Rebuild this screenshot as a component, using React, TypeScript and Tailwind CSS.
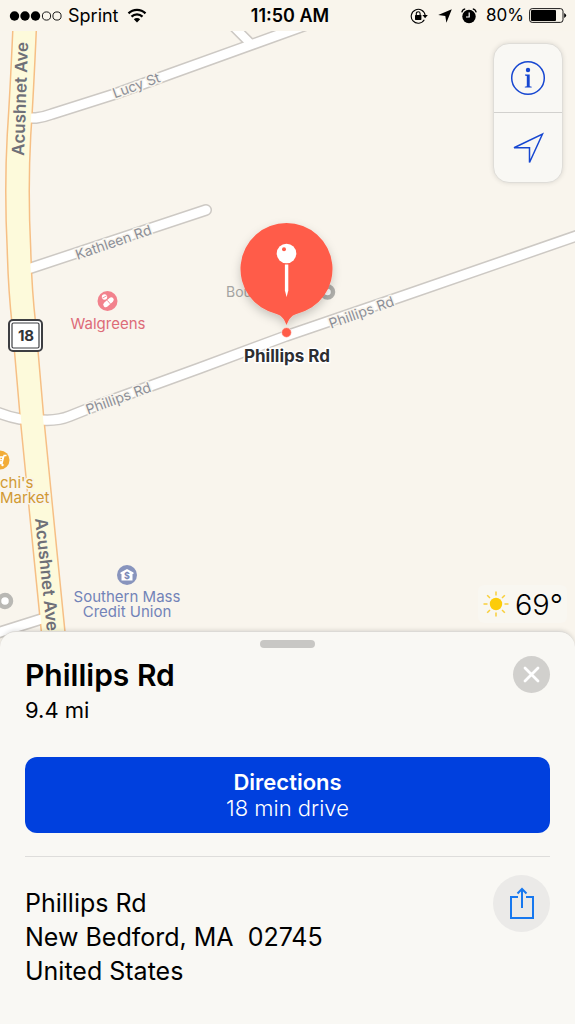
import type { ReactNode } from 'react'

const PHILLIPS = 'M-6 411 Q8 417 20 419 L42 420 Q58 421 70 416 L90 408 L200 368 L286 336 L400 297 L585 233'
const LUCY = 'M22 118 L36 118 Q44 117 52 114 L115 94 L170 74 L320 20'
const STREETS = [
  { d: PHILLIPS, w: 9 },
  { d: LUCY, w: 9 },
  { d: 'M230 23 L250 43', w: 8 },
  { d: 'M22 271 L206 210', w: 9 },
  { d: 'M-6 634 L48 617', w: 9 },
]
const AVENUE = 'M25 20 Q22 90 19 135 Q16 190 19 250 Q20 290 24 325 L32 418 L45 550 L56 660'

function Label({ x, y, rotate = 0, size = 14, weight = 400, fill, halo = '#f9f5ed', anchor = 'middle', children }: {
  x: number
  y: number
  rotate?: number
  size?: number
  weight?: number
  fill: string
  halo?: string
  anchor?: 'start' | 'middle'
  children: ReactNode
}) {
  return (
    <text
      transform={`translate(${x} ${y}) rotate(${rotate})`}
      fontSize={size}
      fontWeight={weight}
      fill={fill}
      stroke={halo}
      strokeWidth="3"
      strokeLinejoin="round"
      paintOrder="stroke"
      textAnchor={anchor}
    >
      {children}
    </text>
  )
}

function StatusBar() {
  return (
    <header className="grid h-[31px] grid-cols-[1fr_auto_1fr] items-center bg-[#f9f5ec] pr-2 pl-[9px] text-lg leading-none text-black">
      <div className="flex items-center gap-[6px]">
        <svg width="53" height="12" viewBox="0 0 53 12" aria-label="Signal: 3 of 5">
          {[5.5, 16, 26.5].map(cx => <circle key={cx} cx={cx} cy="6" r="4.7" />)}
          {[37.5, 48].map(cx => <circle key={cx} cx={cx} cy="6" r="4.1" fill="none" stroke="#000" strokeWidth="0.9" />)}
        </svg>
        <span>Sprint</span>
        <svg width="20" height="15" viewBox="0 0 20 15" className="ml-[2px]" aria-label="Wi-Fi">
          <g fill="none" stroke="#000" strokeWidth="2.2">
            <path d="M1.5 5.4a12 12 0 0 1 17 0" />
            <path d="M4.5 8.6a7.8 7.8 0 0 1 11 0" />
          </g>
          <path d="M6.8 11.2a4.6 4.6 0 0 1 6.4 0L10 14.4z" />
        </svg>
      </div>
      <time className="pl-1 font-semibold">11:50 AM</time>
      <div className="flex items-center justify-end">
        <svg width="18" height="16" viewBox="0 0 18 16" className="mr-[10px]" aria-label="Rotation lock">
          <path d="M14.3 11.8A7 7 0 1 1 15.2 7.6" fill="none" stroke="#000" strokeWidth="1.1" />
          <path d="M12.4 7h5.4l-2.7 3.3z" />
          <rect x="5" y="7" width="6.4" height="4.9" rx="0.6" />
          <path d="M6.3 7.2V5.6a1.9 1.9 0 0 1 3.8 0v1.6" fill="none" stroke="#000" strokeWidth="1.1" />
        </svg>
        <svg width="14" height="14" viewBox="0 0 14 14" className="mr-[9px]" aria-label="Location">
          <path d="M13.8 0.2 8.4 13.8 7.3 6.9 0.2 6.1z" />
        </svg>
        <svg width="16" height="16" viewBox="0 0 16 16" className="mr-[9px]" aria-label="Alarm">
          <circle cx="8" cy="8.5" r="6.7" />
          <path d="M0.8 4.3Q1.4 1.5 4.2 0.9M15.2 4.3Q14.6 1.5 11.8 0.9" fill="none" stroke="#000" strokeWidth="1.3" />
          <path d="M8.2 4.5V9H5" fill="none" stroke="#fff" strokeWidth="1.2" />
        </svg>
        <span className="mr-[5px] text-[17px]">80%</span>
        <svg width="38" height="15" viewBox="0 0 38 15" aria-label="Battery">
          <rect x="0.6" y="0.6" width="33.4" height="13.8" rx="2.6" fill="none" stroke="#000" strokeWidth="0.9" />
          <rect x="2" y="2" width="25" height="11" rx="1" />
          <path d="M35.2 5q4 2.5 0 5z" />
        </svg>
      </div>
    </header>
  )
}

function MapCanvas() {
  return (
    <svg className="absolute inset-0 h-full w-full" viewBox="0 31 575 612" preserveAspectRatio="xMidYMid slice" role="img" aria-label="Map around Phillips Rd">
      <defs>
        <filter id="pin-shadow" x="-30%" y="-30%" width="160%" height="160%">
          <feDropShadow dx="0" dy="4" stdDeviation="5" floodColor="#000" floodOpacity="0.2" />
        </filter>
      </defs>

      {/* Casings go first so junctions stay open */}
      <g fill="none" strokeLinecap="round" strokeLinejoin="round">
        {STREETS.map(s => <path key={s.d} d={s.d} stroke="#cdc9c4" strokeWidth={s.w + 3} />)}
        <path d={AVENUE} stroke="#f6bf85" strokeWidth="25" />
        {STREETS.map(s => <path key={s.d} d={s.d} stroke="#fff" strokeWidth={s.w} />)}
        <path d={AVENUE} stroke="#fdfadb" strokeWidth="22" />
      </g>

      <Label x={138} y={90} rotate={-20} fill="#8c8f98">Lucy St</Label>
      <Label x={115} y={247} rotate={-19} fill="#8c8f98">Kathleen Rd</Label>
      <Label x={120} y={403} rotate={-20} fill="#8c8f98">Phillips Rd</Label>
      <Label x={363} y={317} rotate={-20} fill="#8c8f98">Phillips Rd</Label>
      <Label x={26} y={99} rotate={-88} size={17} weight={600} fill="#6f7078" halo="#fdfadb">Acushnet Ave</Label>
      <Label x={41} y={575} rotate={84} size={17} weight={600} fill="#6f7078" halo="#fdfadb">Acushnet Ave</Label>

      {/* Route shield */}
      <rect x="9" y="320" width="33" height="31" rx="4" fill="#fff" stroke="#3d3e42" strokeWidth="2" />
      <rect x="12" y="323" width="27" height="25" rx="1.5" fill="#fff" stroke="#3d3e42" strokeWidth="1.2" />
      <Label x={26} y={341} size={15} weight={700} fill="#333438" halo="#fff">18</Label>

      {/* Pharmacy */}
      <circle cx="107.5" cy="301" r="10" fill="#f2828d" />
      <circle cx="104.5" cy="297" r="2.7" fill="#fff" />
      <path d="M102.3 298.2 106.7 295.8" stroke="#f2828d" strokeWidth="0.8" />
      <path d="M105.8 304.7 111.2 299.8" stroke="#fff" strokeWidth="5" strokeLinecap="round" />
      <path d="M107.2 300.3 110.5 304" stroke="#f2828d" strokeWidth="0.9" />
      <Label x={108} y={329} size={15} fill="#dd6b78">Walgreens</Label>

      {/* Grocery */}
      <circle cx="0" cy="460" r="9.5" fill="#f2ac37" />
      <path d="M-6 457h9l-1 5h-7M6.5 455.500h-2.500l-2 8h-7" fill="none" stroke="#fff" strokeWidth="1.3" />
      <path d="M-4 459.500h7M0 457v5" stroke="#fff" strokeWidth="0.9" />
      <circle cx="2.5" cy="465" r="1.2" fill="#fff" />
      <Label x={0} y={488} size={15} fill="#d19a34" anchor="start">chi's</Label>
      <Label x={0} y={503} size={15} fill="#d19a34" anchor="start">Market</Label>

      {/* Bank */}
      <circle cx="127" cy="575" r="10" fill="#8894bd" />
      <path d="M120.500 572.500 127 569 133.500 572.500V574H132.500V580.500H121.500V574H120.500z" fill="#fff" />
      <text x="127" y="579" fontSize="9" fontWeight="700" fill="#7785b5" textAnchor="middle">$</text>
      <Label x={127} y={602} size={15} fill="#7283b8">Southern Mass</Label>
      <Label x={127} y={617} size={15} fill="#7283b8">Credit Union</Label>

      <circle cx="5" cy="601" r="6" fill="#fff" stroke="#b9b8b4" strokeWidth="4.5" />
      <Label x={226} y={297} fill="#a5a4a2" anchor="start">Bou</Label>
      <circle cx="327.5" cy="292" r="5.5" fill="#fff" stroke="#b0afab" strokeWidth="4.5" />

      {/* Dropped pin */}
      <path
        d="M286.500 223a46 46 0 0 1 10 90.900C291 315.500 289 319 286.500 325C284 319 282 315.500 276.500 313.900A46 46 0 0 1 286.500 223z"
        fill="#ff5c49"
        filter="url(#pin-shadow)"
      />
      <circle cx="286.5" cy="253.5" r="9.8" fill="#fff" />
      <circle cx="284" cy="249.3" r="2" fill="#ff5c49" />
      <path d="M284.900 264.500h3.400v26l-1.700 6.500-1.700-6.500z" fill="#fff" />
      <circle cx="286.5" cy="332.5" r="4.9" fill="#ff5c49" stroke="#fff" strokeWidth="0.6" />
      <Label x={287} y={362} size={17} weight={700} fill="#2d2e32" halo="#fff">Phillips Rd</Label>
    </svg>
  )
}

function MapControls() {
  return (
    <div className="absolute top-3 right-3 flex w-[70px] flex-col divide-y divide-[#d2d1ce] overflow-hidden rounded-2xl border border-[#dfddd8] bg-[#f9f8f4] shadow-[0_0_5px_rgba(0,0,0,0.12)]">
      <button type="button" aria-label="Map info" className="flex h-[69px] items-center justify-center">
        <svg width="36" height="36" viewBox="0 0 36 36">
          <circle cx="18" cy="18" r="16.3" fill="none" stroke="#1747d1" strokeWidth="1.5" />
          <circle cx="18" cy="10" r="2.2" fill="#1747d1" />
          <path d="M15 14.600h4.700v11.600l2 .5v.9h-6.900v-.9l2-.5V16l-1.800-.4z" fill="#1747d1" />
        </svg>
      </button>
      <button type="button" aria-label="Track location" className="flex h-[69px] items-center justify-center">
        <svg width="34" height="34" viewBox="0 0 34 34">
          <path d="M31.500 3 18.500 31.500V16.800H3z" fill="none" stroke="#1747d1" strokeWidth="1.5" />
        </svg>
      </button>
    </div>
  )
}

function Weather() {
  return (
    <div className="absolute right-2 bottom-5 flex h-[38px] items-center gap-[5px] rounded-md bg-[#f9f7f1] pr-1 pl-1">
      <svg width="28" height="28" viewBox="0 0 28 28" aria-label="Sunny">
        <circle cx="14" cy="14" r="6.2" fill="#fccc0a" />
        <g stroke="#f9cf3a" strokeWidth="1.5">
          {[0, 45, 90, 135, 180, 225, 270, 315].map(a => (
            <path key={a} d="M14 1.500v4" transform={`rotate(${a} 14 14)`} />
          ))}
        </g>
      </svg>
      <span className="text-[29px] leading-none font-light text-black">69°</span>
    </div>
  )
}

function PlaceSheet() {
  return (
    <section className="relative -mt-3 rounded-t-2xl border-t border-[#dcdad6] bg-[#f9f8f4] px-[25px] pt-2 pb-9 text-black shadow-[0_-1px_4px_rgba(0,0,0,0.12)]">
      <div className="mx-auto h-2 w-[55px] rounded-full bg-[#c8c7c4]" />
      <div className="mt-2 flex items-start justify-between">
        <div>
          <h1 className="text-[30px] leading-[38px] font-semibold">Phillips Rd</h1>
          <p className="text-[22px] leading-[32px]">9.4 mi</p>
        </div>
        <button type="button" aria-label="Close" className="flex h-[37px] w-[37px] items-center justify-center rounded-full bg-[#d1d0cd]">
          <svg width="17" height="17" viewBox="0 0 17 17">
            <path d="M2 2l13 13M15 2 2 15" stroke="#fff" strokeWidth="2.8" strokeLinecap="round" />
          </svg>
        </button>
      </div>
      <button type="button" className="mt-[31px] flex h-[76px] w-full flex-col items-center justify-center rounded-xl bg-[#0040de] text-[22px] leading-[26px] text-white">
        <span className="font-semibold">Directions</span>
        <span className="font-light">18 min drive</span>
      </button>
      <div className="mt-[23px] flex items-start justify-between border-t border-[#dedddb] pt-[18px]">
        <address className="mt-[11px] text-[25px] leading-[34px] whitespace-pre not-italic">
          {'Phillips Rd\nNew Bedford, MA  02745\nUnited States'}
        </address>
        <button type="button" aria-label="Share" className="flex h-[57px] w-[57px] items-center justify-center rounded-full bg-[#ebeae8]">
          <svg width="26" height="34" viewBox="0 0 26 34" fill="none" stroke="#1778ef" strokeWidth="2">
            <path d="M9 10H2v21h22V10h-7" />
            <path d="M13 21V2M8.500 6.500 13 2l4.500 4.500" />
          </svg>
        </button>
      </div>
    </section>
  )
}

export default function App() {
  return (
    <div className="flex min-h-screen flex-col bg-[#f9f5ed] font-[Inter,'Liberation_Sans',sans-serif]">
      <StatusBar />
      <main className="flex flex-1 flex-col">
        <div className="relative min-h-80 flex-1 overflow-hidden bg-[#f9f5ed]">
          <MapCanvas />
          <MapControls />
          <Weather />
        </div>
        <PlaceSheet />
      </main>
    </div>
  )
}
